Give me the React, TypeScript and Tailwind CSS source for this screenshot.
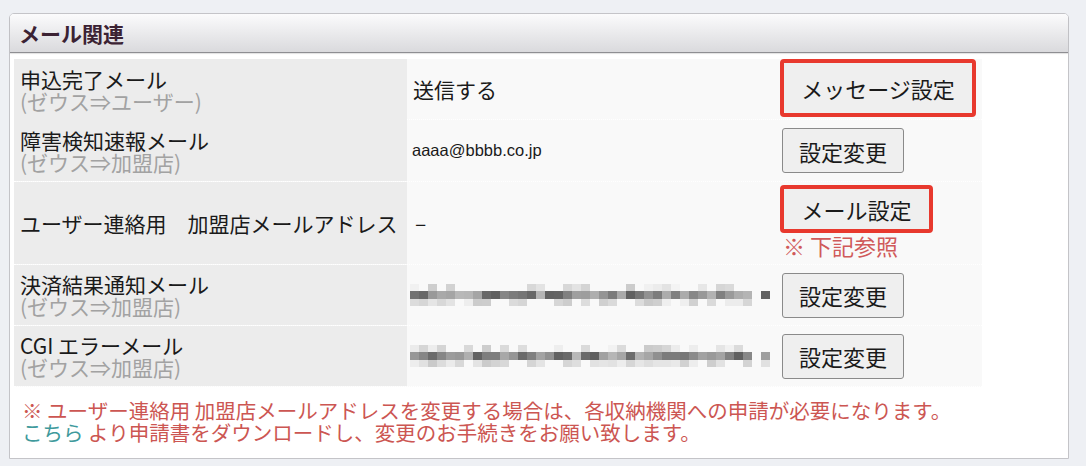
import type { ReactNode } from "react";

// blurred address: a mosaic of grey cells built from a fixed seed
function Mosaic({ seed }: { seed: number }) {
  let s = seed;
  const rand = () => {
    s = (s * 9301 + 49297) % 233280;
    return s / 233280;
  };
  const bands = [
    { h: 7, lo: 200, hi: 245, skip: 0.5 },
    { h: 8, lo: 95, hi: 185, skip: 0 },
    { h: 7, lo: 200, hi: 240, skip: 0.3 },
  ];
  return (
    <div className="flex flex-col">
      {bands.map((b, bi) => (
        <div key={bi} className="flex">
          {Array.from({ length: 40 }).map((_, i) => {
            const r = rand();
            const gap = i === 38;
            const v = Math.round(b.lo + (b.hi - b.lo) * rand());
            const c = gap || r < b.skip ? "transparent" : `rgb(${v},${v},${v})`;
            return <span key={i} style={{ width: 9, height: b.h, background: c }} />;
          })}
        </div>
      ))}
    </div>
  );
}

function Btn({ children }: { children: ReactNode }) {
  return (
    <button className="h-[45px] w-[122px] rounded-[3px] border border-[#8a8a8a] bg-[#efefef] text-[22px] leading-none text-[#1a1a1a]">
      {children}
    </button>
  );
}

function HotBtn({ children, w, h }: { children: ReactNode; w: string; h: string }) {
  return (
    <button
      className={`${w} ${h} rounded-[4px] border-4 border-[#e8392e] bg-[#efefef] text-[22px] leading-none text-[#1a1a1a]`}
    >
      {children}
    </button>
  );
}

function Label({ main, sub }: { main: string; sub?: string }) {
  return (
    <div className="flex flex-col justify-center bg-[#ececec] pl-[6px] text-[21px] leading-[22px]">
      <span className="text-[#1a1a1a]">{main}</span>
      {sub && <span className="text-[#a2a2a2]">{sub}</span>}
    </div>
  );
}

function Row({ height, children }: { height: string; children: ReactNode }) {
  return (
    <div className={`grid ${height} grid-cols-[393px_373px_1fr] border-b border-dotted border-white`}>
      {children}
    </div>
  );
}

export default function App() {
  return (
    <div className="min-h-[466px] bg-[#eef0f4] px-[9px] pt-[13px] font-['Noto_Sans_CJK_JP',sans-serif]">
      <div className="w-[1060px] h-[446px] rounded-t-[5px] border border-[#c4c4c8] bg-white">
        <div className="flex h-[39px] items-center rounded-t-[4px] border-b border-[#8e8e92] bg-linear-to-b from-[#fbfbfc] to-[#dadadd] pl-[9px] shadow-[0_1px_1px_rgba(0,0,0,0.12)]">
          <span className="text-[21px] font-bold leading-none text-[#3b2233]">メール関連</span>
        </div>

        <div className="px-[4px] pt-[6px]">
          <div className="w-[968px] bg-[#f9f9f9]">
            <Row height="h-[61px]">
              <Label main="申込完了メール" sub="(ゼウス⇒ユーザー)" />
              <div className="flex items-center pl-[6px] text-[21px] text-[#1a1a1a]">送信する</div>
              <div className="flex items-center pb-[3px]">
                <HotBtn w="w-[196px]" h="h-[58px]">メッセージ設定</HotBtn>
              </div>
            </Row>
            <Row height="h-[62px]">
              <Label main="障害検知速報メール" sub="(ゼウス⇒加盟店)" />
              <div className="flex items-center pl-[5px] font-['Liberation_Sans',sans-serif] text-[16.5px] text-[#1a1a1a]">
                aaaa@bbbb.co.jp
              </div>
              <div className="flex items-center pl-[2px]">
                <Btn>設定変更</Btn>
              </div>
            </Row>
            <Row height="h-[83px]">
              <Label main="ユーザー連絡用　加盟店メールアドレス" />
              <div className="flex items-center pl-[8px] text-[21px] text-[#1a1a1a]">–</div>
              <div className="flex flex-col pt-[3px]">
                <HotBtn w="w-[153px]" h="h-[48px]">メール設定</HotBtn>
                <span className="pl-[3px] text-[22px] leading-[24px] text-[#d05a5a]">※ 下記参照</span>
              </div>
            </Row>
            <Row height="h-[61px]">
              <Label main="決済結果通知メール" sub="(ゼウス⇒加盟店)" />
              <div className="flex items-center pl-[3px]">
                <Mosaic seed={17} />
              </div>
              <div className="flex items-center pl-[2px]">
                <Btn>設定変更</Btn>
              </div>
            </Row>
            <Row height="h-[61px]">
              <Label main="CGI エラーメール" sub="(ゼウス⇒加盟店)" />
              <div className="flex items-center pl-[3px]">
                <Mosaic seed={91} />
              </div>
              <div className="flex items-center pl-[2px]">
                <Btn>設定変更</Btn>
              </div>
            </Row>
          </div>

          <div className="mt-[12px] pl-[8px] text-[20.5px] leading-[22px] text-[#cc5652]">
            <p>※ ユーザー連絡用 加盟店メールアドレスを変更する場合は、各収納機関への申請が必要になります。</p>
            <p>
              <a className="text-[#3f9a9c]">こちら</a> より申請書をダウンロードし、変更のお手続きをお願い致します。
            </p>
          </div>
        </div>
      </div>
    </div>
  );
}
